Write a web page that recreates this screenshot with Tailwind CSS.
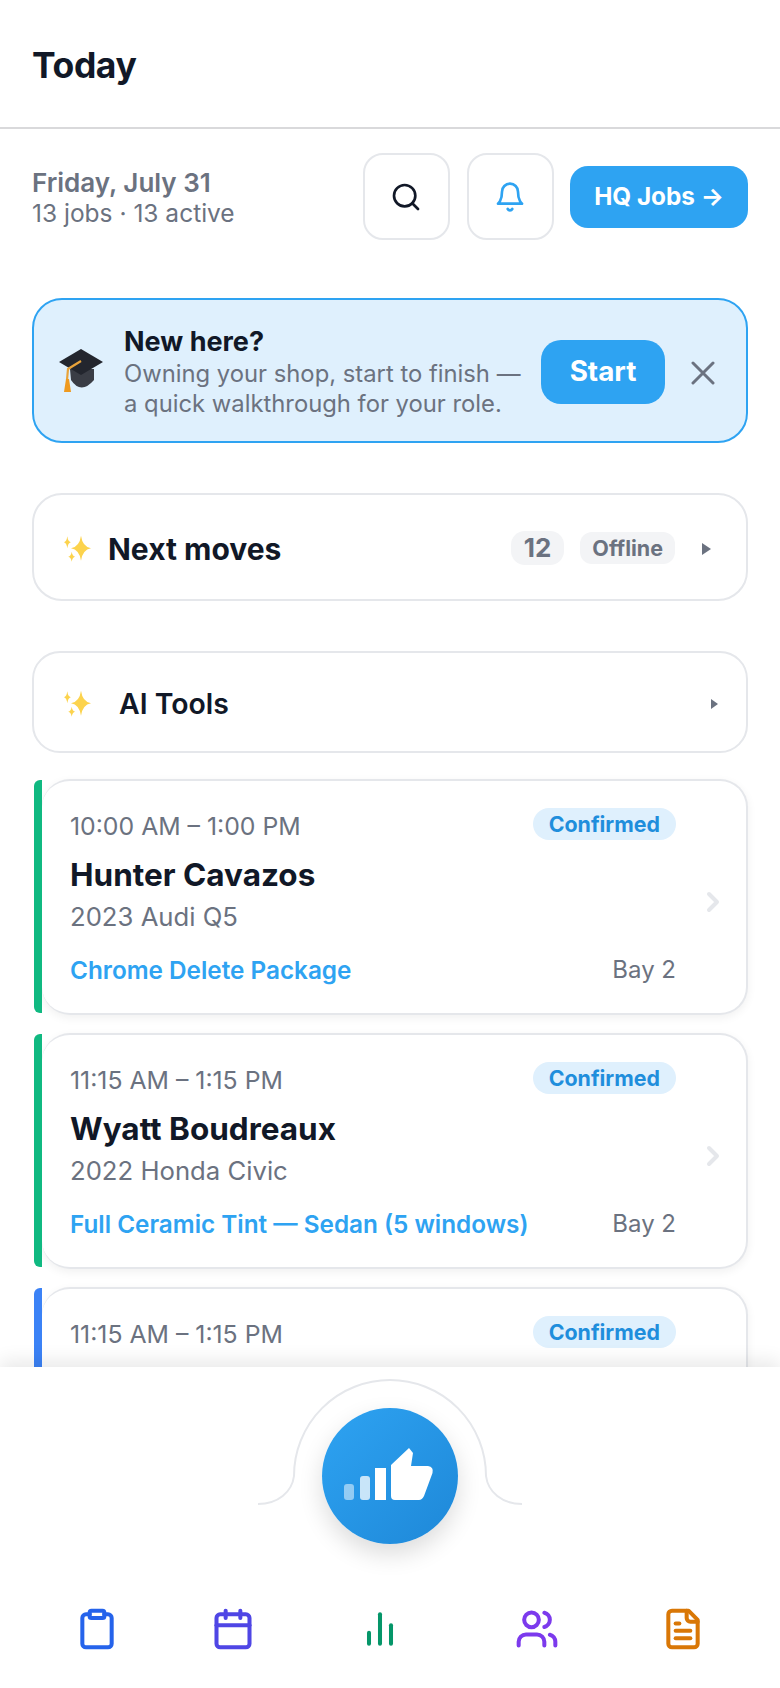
<!DOCTYPE html>
<html lang="en">
  <head>
    <meta charset="UTF-8" />
    <meta name="viewport" content="width=device-width, initial-scale=1.0" />
    <title>Today</title>
    <script src="https://cdn.jsdelivr.net/npm/@tailwindcss/browser@4"></script>
  </head>
  <body class="bg-white font-['Inter',sans-serif] text-[#111827]">
    <div class="relative h-[1688px] w-[780px] overflow-hidden">
      <header class="flex h-[129px] items-center border-b-2 border-[#d9d9db] px-[32px] pt-[4px]">
        <h1 class="text-[35.500px] font-bold leading-none tracking-[-0.4px]">Today</h1>
      </header>

      <main class="px-[32px]">
        <!-- date + actions -->
        <section class="mt-[24px] flex h-[87px] items-center">
          <div class="mt-[1px] flex-1">
            <p class="text-[26px] font-semibold leading-[31px] text-[#6b7280]">Friday, July 31</p>
            <p class="text-[24.500px] leading-[30px] text-[#6b7280]">13 jobs · 13 active</p>
          </div>
          <button class="flex h-[87px] w-[87px] items-center justify-center rounded-[20px] border-2 border-[#e5e7eb]">
            <svg class="-ml-[2px] h-[32px] w-[32px]" viewBox="0 0 24 24" fill="none" stroke="#111827" stroke-width="2" stroke-linecap="round" stroke-linejoin="round"><circle cx="11" cy="11" r="8" /><path d="m21 21-4.3-4.3" /></svg>
          </button>
          <button class="ml-[17px] flex h-[87px] w-[87px] items-center justify-center rounded-[20px] border-2 border-[#e5e7eb]">
            <svg class="-ml-[1px] h-[32px] w-[32px]" viewBox="0 0 24 24" fill="none" stroke="#2ea3f2" stroke-width="2" stroke-linecap="round" stroke-linejoin="round"><path d="M6 8a6 6 0 0 1 12 0c0 7 3 9 3 9H3s3-2 3-9" /><path d="M10.3 21a1.94 1.94 0 0 0 3.4 0" /></svg>
          </button>
          <button class="ml-[16px] h-[62px] w-[178px] rounded-[18px] bg-[#2ea3f2] text-[24.300px] font-bold text-white">HQ Jobs →</button>
        </section>

        <!-- onboarding banner -->
        <section class="mt-[58px] flex h-[145px] items-center rounded-[30px] border-2 border-[#2ea3f2] bg-[#dff0fd] pl-[25px] pr-[31px]">
          <svg class="h-[44px] w-[44px] shrink-0" viewBox="0 0 44 44">
            <path d="M11 20 L12 31 Q22 46 35 31 L35 20 Z" fill="#3a3d45" />
            <path d="M22 0 L44 13 L22 26 L0 13 Z" fill="#23262e" />
            <path d="M22 12 L9 20 L8 31" fill="none" stroke="#e8a33a" stroke-width="2.2" />
            <path d="M5 43 L7 30 L10 30 L12 43 Z" fill="#ef9a1f" />
          </svg>
          <div class="ml-[21px] mt-[3px] flex-1">
            <p class="text-[27px] font-bold leading-[32px]">New here?</p>
            <p class="mt-[1px] text-[23.800px] leading-[30px] text-[#6b7280]">Owning your shop, start to finish —<br />a quick walkthrough for your role.</p>
          </div>
          <button class="mt-[3px] h-[64px] w-[124px] rounded-[20px] bg-[#2ea3f2] text-[27.800px] font-bold text-white">Start</button>
          <svg class="ml-[26px] mt-[4px] h-[24px] w-[24px]" viewBox="0 0 24 24" fill="none" stroke="#6b7280" stroke-width="3" stroke-linecap="round"><path d="M2 2 L22 22 M22 2 L2 22" /></svg>
        </section>

        <!-- next moves -->
        <section class="mt-[50px] flex h-[108px] items-center rounded-[30px] border-2 border-[#e5e7eb] pl-[30px] pr-[35px]">
          <svg class="mt-[4px] h-[30px] w-[30px]" viewBox="0 0 30 30" fill="#fcd34d"><path d="M17 1.800 Q18.500 12.800 27 14.300 Q18.500 15.800 17 26.800 Q15.500 15.800 7 14.300 Q15.500 12.800 17 1.800Z" /><path d="M3.300 2.300 Q4 7.600 6.800 8.300 Q4 9 3.300 14.300 Q2.600 9 0 8.300 Q2.600 7.600 3.300 2.300Z" /><path d="M7.700 17.700 Q8.400 22 11.200 22.700 Q8.400 23.400 7.700 27.700 Q7 23.400 4.200 22.700 Q7 22 7.700 17.700Z" /></svg>
          <h2 class="ml-[14px] mt-[4px] flex-1 text-[30px] font-bold leading-none">Next moves</h2>
          <span class="mt-[2px] rounded-[14px] bg-[#f3f4f6] px-[13px] py-[4px] text-[26px] font-bold leading-[26px] text-[#6b7280]">12</span>
          <span class="ml-[16px] mt-[2px] rounded-[12px] bg-[#f3f4f6] px-[12px] py-[3px] text-[21.500px] font-bold leading-[26px] text-[#6b7280]">Offline</span>
          <span class="ml-[27px] mt-[4px] h-0 w-0 border-y-[6px] border-l-[9px] border-y-transparent border-l-[#6b7280]"></span>
        </section>

        <!-- ai tools -->
        <section class="mt-[50px] flex h-[102px] items-center rounded-[28px] border-2 border-[#e5e7eb] pl-[30px] pr-[28px]">
          <svg class="mt-[4px] h-[30px] w-[30px]" viewBox="0 0 30 30" fill="#fcd34d"><path d="M17 1.800 Q18.500 12.800 27 14.300 Q18.500 15.800 17 26.800 Q15.500 15.800 7 14.300 Q15.500 12.800 17 1.800Z" /><path d="M3.300 2.300 Q4 7.600 6.800 8.300 Q4 9 3.300 14.300 Q2.600 9 0 8.300 Q2.600 7.600 3.300 2.300Z" /><path d="M7.700 17.700 Q8.400 22 11.200 22.700 Q8.400 23.400 7.700 27.700 Q7 23.400 4.200 22.700 Q7 22 7.700 17.700Z" /></svg>
          <h2 class="ml-[25px] mt-[5px] flex-1 text-[28.400px] font-semibold leading-none">AI Tools</h2>
          <span class="mt-[4px] h-0 w-0 border-y-[5px] border-l-[7px] border-y-transparent border-l-[#6b7280]"></span>
        </section>

        <!-- jobs -->
        <section class="mt-[26px] flex flex-col gap-[18px]">
          <article class="relative pl-[10px]">
            <div class="absolute bottom-[2px] left-[2px] top-[1px] w-[8px] rounded-l-[6px] bg-[#10b981]"></div>
            <div class="flex h-[236px] items-start rounded-[28px] border-2 border-l-0 border-[#e5e7eb] bg-white pl-[28px] pr-[26px] pt-[27px] shadow-[0_3px_10px_rgba(0,0,0,0.06)]">
              <div class="flex-1">
                <div class="flex h-[32px] items-center justify-between">
                  <span class="mt-[5px] text-[24.800px] text-[#6b7280]">10:00 AM – 1:00 PM</span>
                  <span class="rounded-[16px] bg-[#dff0fd] px-[16px] text-[21.400px] font-bold leading-[32px] text-[#1f8edc]">Confirmed</span>
                </div>
                <p class="mt-[17px] text-[31.500px] font-bold leading-[36px]">Hunter Cavazos</p>
                <p class="mt-[8px] text-[25.700px] leading-[32px] text-[#6b7280]">2023 Audi Q5</p>
                <div class="mt-[22px] flex items-center justify-between">
                  <span class="text-[24.300px] font-semibold leading-[30px] text-[#2ea3f2]">Chrome Delete Package</span>
                  <span class="text-[24px] leading-[30px] text-[#6b7280]">Bay 2</span>
                </div>
              </div>
              <svg class="ml-[30px] mt-[83px] h-[22px] w-[14px]" viewBox="0 0 14 22" fill="none" stroke="#e5e7eb" stroke-width="4" stroke-linecap="round" stroke-linejoin="round"><path d="M3 3 L11 11 L3 19" /></svg>
            </div>
          </article>

          <article class="relative pl-[10px]">
            <div class="absolute bottom-[2px] left-[2px] top-[1px] w-[8px] rounded-l-[6px] bg-[#10b981]"></div>
            <div class="flex h-[236px] items-start rounded-[28px] border-2 border-l-0 border-[#e5e7eb] bg-white pl-[28px] pr-[26px] pt-[27px] shadow-[0_3px_10px_rgba(0,0,0,0.06)]">
              <div class="flex-1">
                <div class="flex h-[32px] items-center justify-between">
                  <span class="mt-[5px] text-[24.800px] text-[#6b7280]">11:15 AM – 1:15 PM</span>
                  <span class="rounded-[16px] bg-[#dff0fd] px-[16px] text-[21.400px] font-bold leading-[32px] text-[#1f8edc]">Confirmed</span>
                </div>
                <p class="mt-[17px] text-[31.500px] font-bold leading-[36px]">Wyatt Boudreaux</p>
                <p class="mt-[8px] text-[25.700px] leading-[32px] text-[#6b7280]">2022 Honda Civic</p>
                <div class="mt-[22px] flex items-center justify-between">
                  <span class="text-[24.300px] font-semibold leading-[30px] text-[#2ea3f2]">Full Ceramic Tint — Sedan (5 windows)</span>
                  <span class="text-[24px] leading-[30px] text-[#6b7280]">Bay 2</span>
                </div>
              </div>
              <svg class="ml-[30px] mt-[83px] h-[22px] w-[14px]" viewBox="0 0 14 22" fill="none" stroke="#e5e7eb" stroke-width="4" stroke-linecap="round" stroke-linejoin="round"><path d="M3 3 L11 11 L3 19" /></svg>
            </div>
          </article>

          <article class="relative pl-[10px]">
            <div class="absolute bottom-[2px] left-[2px] top-[1px] w-[8px] rounded-l-[6px] bg-[#3b82f6]"></div>
            <div class="flex h-[236px] rounded-[28px] border-2 border-l-0 border-[#e5e7eb] bg-white pl-[28px] pr-[70px] pt-[27px] shadow-[0_3px_10px_rgba(0,0,0,0.06)]">
              <div class="flex h-[32px] flex-1 items-center justify-between">
                <span class="mt-[5px] text-[24.800px] text-[#6b7280]">11:15 AM – 1:15 PM</span>
                <span class="rounded-[16px] bg-[#dff0fd] px-[16px] text-[21.400px] font-bold leading-[32px] text-[#1f8edc]">Confirmed</span>
              </div>
            </div>
          </article>
        </section>
      </main>

      <!-- bottom bar sits over the list -->
      <nav class="absolute bottom-0 left-0 h-[321px] w-full bg-white shadow-[0_-6px_18px_rgba(0,0,0,0.09)]">
        <svg class="absolute left-[258px] top-[12px]" width="264" height="128" viewBox="0 0 264 128" fill="none" stroke="#e5e7eb" stroke-width="2"><path d="M0 125 C20 125 34 113 36 97 A96 96 0 0 1 228 97 C230 113 244 125 264 125" /></svg>
        <button class="absolute left-[322px] top-[41px] h-[136px] w-[136px] rounded-full bg-gradient-to-br from-[#2ea3f2] to-[#1e88d8] shadow-[0_10px_24px_rgba(0,0,0,0.14)]">
          <svg class="h-[136px] w-[136px]" viewBox="0 0 136 136" fill="#fff">
            <rect x="22" y="76" width="10" height="16" rx="3" opacity="0.5" />
            <rect x="38" y="68" width="10" height="24" rx="3" opacity="0.75" />
            <rect x="53" y="60" width="11" height="32" />
            <path d="M69 57 L87 40 L91 45 L89 58 H106 Q112 59 110.500 65 L102 88 Q100 92 97 92 H73 Q69 92 69 88 Z" />
          </svg>
        </button>
        <div class="absolute bottom-[37px] left-0 flex w-full items-center pl-[75px]">
          <svg class="h-[44px] w-[44px]" viewBox="0 0 24 24" fill="none" stroke="#2563eb" stroke-width="2.200" stroke-linecap="round" stroke-linejoin="round"><rect x="8" y="2" width="8" height="4" rx="1" /><path d="M16 4h2a2 2 0 0 1 2 2v14a2 2 0 0 1-2 2H6a2 2 0 0 1-2-2V6a2 2 0 0 1 2-2h2" /></svg>
          <svg class="ml-[92px] h-[44px] w-[44px]" viewBox="0 0 24 24" fill="none" stroke="#4f46e5" stroke-width="2.200" stroke-linecap="round" stroke-linejoin="round"><path d="M8 2v4" /><path d="M16 2v4" /><rect x="3" y="4" width="18" height="18" rx="2" /><path d="M3 10h18" /></svg>
          <svg class="ml-[103px] h-[44px] w-[44px]" viewBox="0 0 24 24" fill="none" stroke="#059669" stroke-width="2.200" stroke-linecap="round" stroke-linejoin="round"><path d="M18 20V10" /><path d="M12 20V4" /><path d="M6 20v-6" /></svg>
          <svg class="ml-[113px] h-[44px] w-[44px]" viewBox="0 0 24 24" fill="none" stroke="#7c3aed" stroke-width="2.200" stroke-linecap="round" stroke-linejoin="round"><path d="M16 21v-2a4 4 0 0 0-4-4H6a4 4 0 0 0-4 4v2" /><circle cx="9" cy="7" r="4" /><path d="M22 21v-2a4 4 0 0 0-3-3.870" /><path d="M16 3.130a4 4 0 0 1 0 7.750" /></svg>
          <svg class="ml-[102px] h-[44px] w-[44px]" viewBox="0 0 24 24" fill="none" stroke="#d97706" stroke-width="2.200" stroke-linecap="round" stroke-linejoin="round"><path d="M15 2H6a2 2 0 0 0-2 2v16a2 2 0 0 0 2 2h12a2 2 0 0 0 2-2V7Z" /><path d="M14 2v4a2 2 0 0 0 2 2h4" /><path d="M10 9H8" /><path d="M16 13H8" /><path d="M16 17H8" /></svg>
        </div>
      </nav>
    </div>
  </body>
</html>
